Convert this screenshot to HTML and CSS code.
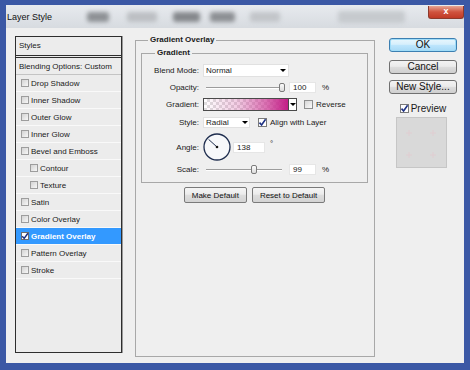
FILE: index.html
```html
<!DOCTYPE html>
<html>
<head>
<meta charset="utf-8">
<title>Layer Style</title>
<link rel="stylesheet" href="styles.css">
</head>
<body>
<div class="window">
  <div class="titlebar">
    <span class="title">Layer Style</span>
    <span class="blob b1"></span>
    <span class="blob b2"></span>
    <span class="blob b3"></span>
    <span class="blob b4"></span>
    <span class="blob b5"></span>
    <span class="blob b6"></span>
    <span class="close">x</span>
  </div>
  <div class="content">
    <div class="list">
      <div class="list-head">Styles</div>
      <div class="list-item blend">Blending Options: Custom</div>
      <div class="list-item"><span class="cb"></span>Drop Shadow</div>
      <div class="list-item"><span class="cb"></span>Inner Shadow</div>
      <div class="list-item"><span class="cb"></span>Outer Glow</div>
      <div class="list-item"><span class="cb"></span>Inner Glow</div>
      <div class="list-item"><span class="cb"></span>Bevel and Emboss</div>
      <div class="list-item sub"><span class="cb"></span>Contour</div>
      <div class="list-item sub"><span class="cb"></span>Texture</div>
      <div class="list-item"><span class="cb"></span>Satin</div>
      <div class="list-item"><span class="cb"></span>Color Overlay</div>
      <div class="list-item sel"><span class="cb on"><svg viewBox="0 0 8 8" width="8" height="8"><path d="M1.2 4.2 L3.2 6.4 L6.9 1.2" fill="none" stroke="#1d3184" stroke-width="1.5"/></svg></span>Gradient Overlay</div>
      <div class="list-item"><span class="cb"></span>Pattern Overlay</div>
      <div class="list-item"><span class="cb"></span>Stroke</div>
    </div>

    <fieldset class="group outer">
      <legend>Gradient Overlay</legend>
      <fieldset class="group inner">
        <legend>Gradient</legend>
        <div class="form">
          <div class="row">
            <span class="label">Blend Mode:</span>
            <div class="select wide"><span>Normal</span><span class="arrow"></span></div>
          </div>
          <div class="row">
            <span class="label">Opacity:</span>
            <div class="slider"><span class="thumb" style="margin-left:76px"></span></div>
            <span class="num">100</span>
            <span class="unit">%</span>
          </div>
          <div class="row">
            <span class="label">Gradient:</span>
            <div class="swatch"></div>
            <div class="swatch-btn"><span class="arrow"></span></div>
            <span class="cbx"></span>
            <span>Reverse</span>
          </div>
          <div class="row tall">
            <span class="label">Style:</span>
            <div class="select narrow"><span>Radial</span><span class="arrow"></span></div>
            <span class="cbx on"><svg viewBox="0 0 9 9" width="9" height="9"><path d="M1.5 4.6 L3.6 7 L7.6 1.3" fill="none" stroke="#1d3184" stroke-width="1.6"/></svg></span>
            <span>Align with Layer</span>
          </div>
          <div class="row dial-row">
            <span class="label">Angle:</span>
            <svg class="dial" viewBox="0 0 28 28" width="28" height="28">
              <circle cx="14" cy="14" r="13" fill="#f7f8fa" stroke="#1f2e4f" stroke-width="1.3"/>
              <line x1="14" y1="14" x2="5.6" y2="6.4" stroke="#1f2e4f" stroke-width="1"/>
              <circle cx="14" cy="14" r="1.3" fill="#111"/>
            </svg>
            <span class="num angle">138</span>
            <span class="deg">°</span>
          </div>
          <div class="row last">
            <span class="label">Scale:</span>
            <div class="slider"><span class="thumb" style="margin-left:48px"></span></div>
            <span class="num">99</span>
            <span class="unit">%</span>
          </div>
        </div>
      </fieldset>
      <div class="btn-row">
        <button class="btn">Make Default</button>
        <button class="btn">Reset to Default</button>
      </div>
    </fieldset>

    <div class="side">
      <button class="sbtn ok">OK</button>
      <button class="sbtn cancel">Cancel</button>
      <button class="sbtn newstyle">New Style...</button>
      <div class="preview-row">
        <span class="cbx on"><svg viewBox="0 0 9 9" width="9" height="9"><path d="M1.5 4.6 L3.6 7 L7.6 1.3" fill="none" stroke="#1d3184" stroke-width="1.6"/></svg></span>
        <span>Preview</span>
      </div>
      <div class="preview-box">
        <svg viewBox="0 0 49 49" width="49" height="49">
          <g stroke="#e0cdd1" stroke-width="1" fill="none">
            <path d="M9 15 H15 M12 12 V18"/>
            <path d="M33 15 H39 M36 12 V18"/>
            <path d="M9 37 H15 M12 34 V40"/>
            <path d="M33 37 H39 M36 34 V40"/>
          </g>
        </svg>
      </div>
    </div>
  </div>
</div>
</body>
</html>
```

FILE: styles.css
```css
* {
  box-sizing: border-box;
}

html, body {
  margin: 0;
  padding: 0;
}

body {
  width: 470px;
  height: 370px;
  overflow: hidden;
  background: #3b58a5;
  font-family: "Liberation Sans", Arial, sans-serif;
  font-size: 8px;
  color: #1a1a1a;
}

.window {
  height: 370px;
  display: flex;
  flex-direction: column;
  padding: 5px 6px 7px 6px;
}

/* title bar */
.titlebar {
  height: 23px;
  flex: none;
  display: flex;
  align-items: center;
  background: linear-gradient(#e7eaee, #d7dbe0);
  overflow: hidden;
}

.title {
  font-size: 9px;
  color: #111;
  padding-left: 1px;
  flex: none;
  white-space: nowrap;
}

.blob {
  flex: none;
  height: 10px;
  border-radius: 3px;
  filter: blur(2px);
}

.b1 { margin-left: 35px; width: 22px; background: #8e9195; }
.b2 { margin-left: 18px; width: 30px; background: #bcbfc3; }
.b3 { margin-left: 16px; width: 27px; background: #85888c; }
.b4 { margin-left: 10px; width: 25px; background: #8d9094; }
.b5 { margin-left: 15px; width: 30px; background: #c2c5c9; }
.b6 { margin-left: 58px; width: 67px; height: 12px; background: #c6cace; }

.close {
  margin-left: auto;
  align-self: flex-start;
  margin-top: 1px;
  width: 36px;
  height: 13px;
  flex: none;
  border: 1px solid #8c3a2c;
  border-top: none;
  border-radius: 0 0 3px 3px;
  background: linear-gradient(#e8a493, #d0533e 50%, #c13a26);
  color: #fff;
  font-weight: bold;
  font-size: 9px;
  line-height: 11px;
  text-align: center;
}

/* content */
.content {
  flex: 1;
  display: flex;
  align-items: flex-start;
  background: #efefef;
  padding: 8px 7px 0 9px;
}

/* styles list */
.list {
  width: 107px;
  height: 317px;
  flex: none;
  border: 1px solid #2e2e2e;
  box-shadow: 1px 0 0 #9a9a9a;
  background: #ececec;
  display: flex;
  flex-direction: column;
}

.list-head {
  height: 21px;
  padding-left: 3px;
  line-height: 18px;
  border-bottom: 3px double #2e2e2e;
}

.list-item {
  height: 17px;
  display: flex;
  align-items: center;
  padding-left: 5px;
  border-bottom: 1px solid #f9f9f9;
}

.list-item.blend {
  padding-left: 3px;
  border-bottom-color: #c4c4c4;
}

.list-item.sub {
  padding-left: 14px;
}

.list-item.sel {
  background: #3399ff;
  color: #fff;
  font-weight: bold;
}

.cb {
  width: 8px;
  height: 8px;
  flex: none;
  margin-right: 2px;
  border: 1px solid #9d9d9d;
  background: linear-gradient(135deg, #d3d3d3, #f7f7f7);
  display: flex;
  align-items: center;
  justify-content: center;
}

.cb.on {
  background: #fff;
  border-color: #6d6d6d;
}

.cb svg {
  flex: none;
}

/* group boxes */
.group {
  margin: 0;
  border: 1px solid #a8a8a8;
  min-width: 0;
}

.group legend {
  font-weight: bold;
  line-height: 10px;
  padding: 0 2px;
}

.outer {
  width: 240px;
  height: 322px;
  flex: none;
  margin-top: -1px;
  margin-left: 13px;
  padding: 0 6px 0 5px;
}

.outer > legend {
  margin-left: 7px;
}

.inner {
  margin-top: 3px;
  padding: 4px 0 5px 0;
}

.inner > legend {
  margin-left: 13px;
}

.form {
  display: flex;
  flex-direction: column;
}

.row {
  height: 17px;
  display: flex;
  align-items: center;
}

.row.tall { height: 19px; }
.row.dial-row { height: 30px; }
.row.last { height: 15px; }

.label {
  width: 57px;
  flex: none;
  text-align: right;
  margin-right: 4px;
}

.select {
  display: flex;
  align-items: center;
  justify-content: space-between;
  background: #fff;
  border: 1px solid #e1e1e1;
  padding: 0 2px 0 2px;
  flex: none;
}

.select.wide { width: 86px; height: 13px; }
.select.narrow { width: 47px; height: 11px; padding-right: 1px; }

.arrow {
  width: 0;
  height: 0;
  border-left: 3px solid transparent;
  border-right: 3px solid transparent;
  border-top: 3px solid #000;
}

.slider {
  width: 86px;
  height: 11px;
  flex: none;
  display: flex;
  align-items: center;
  background:
    linear-gradient(#9c9c9c, #9c9c9c) 3px 5px / 76px 1px no-repeat,
    linear-gradient(#ffffff, #ffffff) 3px 6px / 76px 1px no-repeat;
}

.thumb {
  width: 6px;
  height: 9px;
  flex: none;
  border: 1px solid #7b7b7b;
  border-radius: 2px;
  background: linear-gradient(#fbfbfb, #dcdcdc);
}

.num {
  width: 27px;
  height: 11px;
  flex: none;
  background: #fff;
  border: 1px solid #e6e6e6;
  padding-left: 3px;
  line-height: 9px;
}

.num.angle {
  width: 32px;
  margin-left: 2px;
}

.unit {
  margin-left: 6px;
}

.deg {
  margin-left: 5px;
  margin-bottom: 7px;
}

.swatch {
  width: 86px;
  height: 13px;
  flex: none;
  border: 1px solid #4a4a4a;
  background:
    linear-gradient(to right, rgba(205, 60, 150, 0) 0%, rgba(210, 80, 160, 0.3) 40%, rgba(205, 60, 150, 0.75) 75%, rgba(195, 30, 135, 1) 100%),
    conic-gradient(#dedede 25%, #ffffff 0 50%, #dedede 0 75%, #ffffff 0) 0 0 / 6px 6px;
}

.swatch-btn {
  width: 8px;
  height: 13px;
  flex: none;
  border: 1px solid #4a4a4a;
  border-left: none;
  background: #fff;
  display: flex;
  align-items: center;
  justify-content: center;
}

.cbx {
  width: 9px;
  height: 9px;
  flex: none;
  margin-left: 7px;
  margin-right: 3px;
  border: 1px solid #8e8f8f;
  background: linear-gradient(135deg, #d6d6d6, #fbfbfb);
  display: flex;
  align-items: center;
  justify-content: center;
}

.row.tall .cbx {
  margin-left: 8px;
}

.cbx.on {
  background: #fff;
  border-color: #7a7a7a;
}

.cbx svg {
  flex: none;
  margin: -1px;
}

.dial {
  flex: none;
}

.btn-row {
  margin-top: 4px;
  display: flex;
  justify-content: center;
  gap: 5px;
}

.btn {
  height: 16px;
  padding: 0 7px;
  font-family: "Liberation Sans", Arial, sans-serif;
  font-size: 8px;
  color: #111;
  border: 1px solid #7a7a7a;
  border-radius: 2px;
  background: linear-gradient(#f5f5f5, #ececec 45%, #dedede 50%, #d3d3d3);
}

/* right column */
.side {
  width: 68px;
  flex: none;
  margin-left: 14px;
  padding-top: 2px;
  display: flex;
  flex-direction: column;
}

.sbtn {
  width: 68px;
  height: 14px;
  padding: 0;
  font-family: "Liberation Sans", Arial, sans-serif;
  font-size: 10px;
  line-height: 12px;
  color: #111;
  border: 1px solid #707070;
  border-radius: 3px;
  background: linear-gradient(#f3f3f3, #ebebeb 45%, #dddddd 50%, #cfcfcf);
}

.sbtn.ok {
  border-color: #3c7fb1;
  background: linear-gradient(#e8f6fd, #d6effc 45%, #bee6fd 50%, #a7d9f5);
  box-shadow: inset 0 0 0 1px #9fdcf8;
}

.sbtn.cancel { margin-top: 8px; }
.sbtn.newstyle { margin-top: 6px; }

.preview-row {
  margin-top: 9px;
  height: 10px;
  display: flex;
  align-items: center;
  justify-content: center;
  font-size: 10px;
}

.preview-row .cbx {
  margin-left: 0;
  margin-right: 2px;
}

.preview-box {
  margin-top: 4px;
  margin-left: 7px;
  width: 51px;
  height: 51px;
  border: 1px solid #c6c6c6;
  background: #d9d9d9;
}

.preview-box svg {
  display: block;
}
```
